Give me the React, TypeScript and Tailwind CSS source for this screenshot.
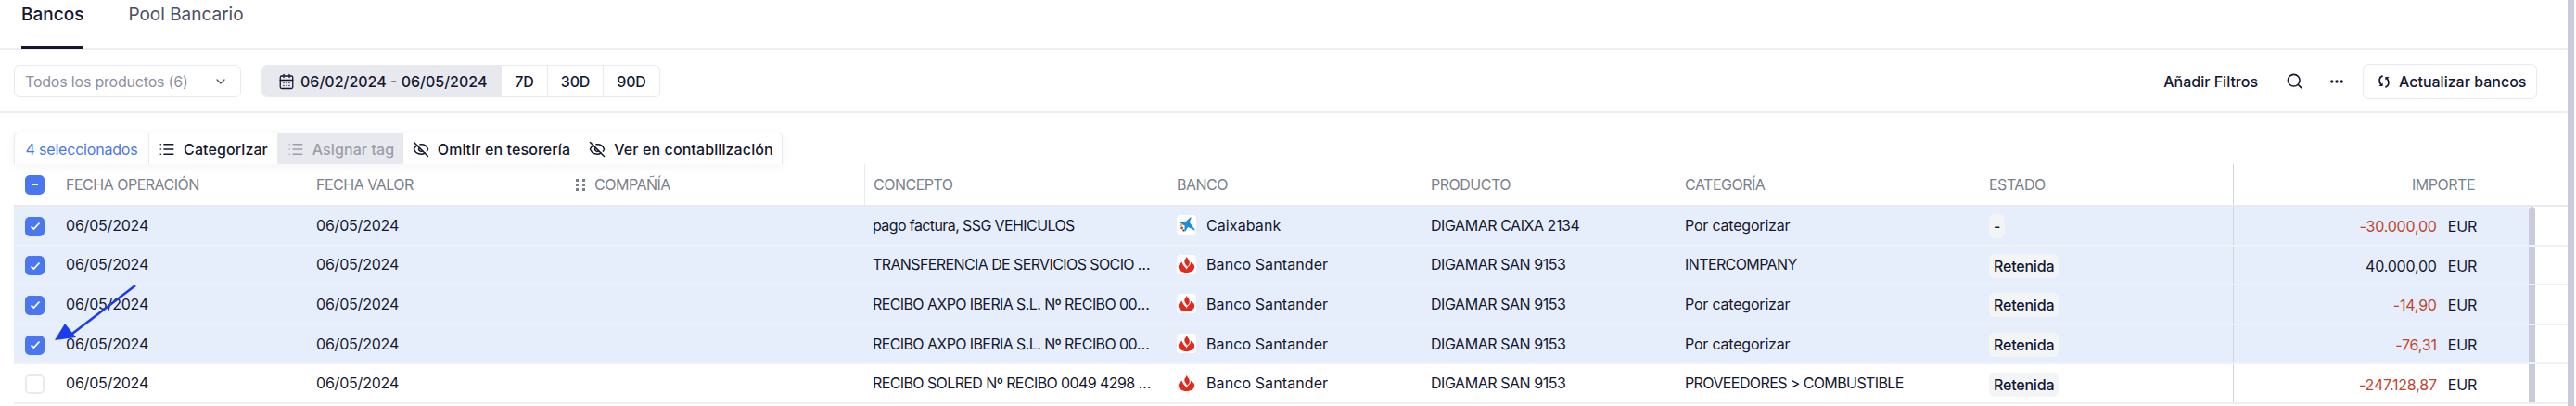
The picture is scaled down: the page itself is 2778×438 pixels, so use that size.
import { CalendarDays, ChevronDown, Ellipsis, EyeOff, List, Search } from "lucide-react";
import React from "react";

const GRID =
  "grid grid-cols-[47px_270px_279px_321px_328px_274px_274px_328px_272px_319px_9px]";

type Row = {
  concepto: string;
  banco: "caixa" | "san";
  producto: string;
  categoria: string;
  estado: string;
  importe: string;
  selected: boolean;
};

const rows: Row[] = [
  {
    concepto: "pago factura, SSG VEHICULOS",
    banco: "caixa",
    producto: "DIGAMAR CAIXA 2134",
    categoria: "Por categorizar",
    estado: "-",
    importe: "-30.000,00",
    selected: true,
  },
  {
    concepto: "TRANSFERENCIA DE SERVICIOS SOCIO SOCIEDAD",
    banco: "san",
    producto: "DIGAMAR SAN 9153",
    categoria: "INTERCOMPANY",
    estado: "Retenida",
    importe: "40.000,00",
    selected: true,
  },
  {
    concepto: "RECIBO AXPO IBERIA S.L. Nº RECIBO 0049 4298",
    banco: "san",
    producto: "DIGAMAR SAN 9153",
    categoria: "Por categorizar",
    estado: "Retenida",
    importe: "-14,90",
    selected: true,
  },
  {
    concepto: "RECIBO AXPO IBERIA S.L. Nº RECIBO 0049 4298",
    banco: "san",
    producto: "DIGAMAR SAN 9153",
    categoria: "Por categorizar",
    estado: "Retenida",
    importe: "-76,31",
    selected: true,
  },
  {
    concepto: "RECIBO SOLRED Nº RECIBO 0049 4298 5921 3310",
    banco: "san",
    producto: "DIGAMAR SAN 9153",
    categoria: "PROVEEDORES > COMBUSTIBLE",
    estado: "Retenida",
    importe: "-247.128,87",
    selected: false,
  },
];

function CaixaLogo() {
  return (
    <svg width="21" height="21" viewBox="0 0 21 21">
      <path
        d="M15 3 L13.2 8 L19 15.8 L12 12 L9 17 L9.2 11.2 L3 7.5 L10 7.8 Z"
        fill="#1a8fd6"
        stroke="#1a8fd6"
        strokeWidth="1.2"
        strokeLinejoin="round"
      />
      <circle cx="5" cy="11" r="1.2" fill="#f2b632" />
      <circle cx="5.6" cy="14" r="1.4" fill="#e2382f" />
      <circle cx="7.4" cy="16.6" r="1" fill="#333" />
    </svg>
  );
}

function SantanderLogo() {
  return (
    <svg width="21" height="21" viewBox="0 0 21 21">
      <path
        d="M10.8 1.8 C11.6 4.6 14.4 6 13.8 9.2 C13.5 10.8 12.2 11.6 11 12.8 C10.3 10.8 7.9 9.3 8.3 6.6 C8.6 4.8 10.4 3.8 10.8 1.8 Z"
        fill="#e3281c"
      />
      <path
        d="M6 7.8 C3.6 9 1.8 10.6 1.8 13 C1.8 16.4 5.6 19 10.5 19 C15.4 19 19.2 16.4 19.2 13 C19.2 10.6 17.4 9 15 7.8 C15.4 10.2 13.6 11.8 12 13.2 C11.4 14 10.9 14.8 10.7 15.8 C9.8 13.2 5.6 11 6 7.8 Z"
        fill="#e3281c"
      />
    </svg>
  );
}

function RefreshIcon() {
  return (
    <svg width="16" height="16" viewBox="0 0 16 16" fill="none" stroke="#14172f" strokeWidth="1.8">
      <path d="M6 2.2 C3 3.2 2 7.5 4.5 11" strokeLinecap="round" />
      <path d="M10 13.8 C13 12.8 14 8.5 11.5 5" strokeLinecap="round" />
      <path d="M2.4 13 L6.6 13 L6.6 9.4 Z" fill="#14172f" stroke="none" />
      <path d="M13.6 3 L9.4 3 L9.4 6.6 Z" fill="#14172f" stroke="none" />
    </svg>
  );
}

function Check({ state }: { state: "on" | "off" | "mixed" }) {
  if (state === "off") {
    return <div className="size-[21px] rounded-[5px] border-2 border-[#e8eaef] bg-white" />;
  }
  return (
    <div className="flex size-[21px] items-center justify-center rounded-[5px] bg-[#4a76ef]">
      {state === "on" ? (
        <svg width="12" height="10" viewBox="0 0 12 10" fill="none" stroke="white" strokeWidth="1.8">
          <path d="M1.5 5.5 L4.5 8 L10.5 1.5" />
        </svg>
      ) : (
        <div className="h-[2px] w-[7px] bg-white" />
      )}
    </div>
  );
}

function BarItem({
  icon,
  label,
  className,
}: {
  icon: React.ReactNode;
  label: string;
  className: string;
}) {
  return (
    <div className={`flex h-full items-center gap-[9px] tracking-[0.1px] ${className}`}>
      {icon}
      <span>{label}</span>
    </div>
  );
}

function Cell({ children, className = "" }: { children: React.ReactNode; className?: string }) {
  return <div className={`flex items-center pb-[1px] pl-[9px] ${className}`}>{children}</div>;
}

export default function App() {
  return (
    <div className="flex h-[438px] w-[2778px] overflow-hidden bg-white font-['Inter',sans-serif] text-[16px] tracking-[-0.2px] text-[#14172f]">
      <div className="w-[2769px] shrink-0">
        {/* tabs */}
        <div className="flex h-[54px] gap-[48px] border-b-2 border-[#eceef2] pl-[23px] text-[19px] tracking-normal">
          <div className="h-[53px] border-b-[3px] border-[#14172f] pt-[2px] font-medium">Bancos</div>
          <div className="pt-[2px] text-[#4b4f5e]">Pool Bancario</div>
        </div>

        {/* filtros */}
        <div className="flex h-[68px] items-center justify-between border-b-2 border-[#eceef2] pl-[15px] pr-[33px] pt-[1px]">
          <div className="flex items-center gap-[22px]">
            <div className="flex h-[35px] w-[245px] items-center justify-between rounded-[6px] border border-[#e8eaef] pl-[11px] pr-[13px] text-[#8c90a0]">
              <span>Todos los productos (6)</span>
              <ChevronDown size={16} strokeWidth={1.8} className="text-[#4b4f5e]" />
            </div>
            <div className="flex h-[35px] w-[430px] overflow-hidden rounded-[6px] border border-[#e8eaef] font-medium">
              <div className="flex w-[258px] items-center gap-[6px] bg-[#e8e9ee] pl-[17px] tracking-normal">
                <CalendarDays size={18} strokeWidth={1.7} />
                <span>06/02/2024 - 06/05/2024</span>
              </div>
              <div className="flex w-[50px] items-center justify-center border-r border-[#e8eaef]">7D</div>
              <div className="flex w-[60px] items-center justify-center border-r border-[#e8eaef]">30D</div>
              <div className="flex flex-1 items-center justify-center">90D</div>
            </div>
          </div>
          <div className="flex items-center font-medium tracking-normal">
            <span>Añadir Filtros</span>
            <Search size={19} strokeWidth={2} className="ml-[30px]" />
            <Ellipsis size={18} strokeWidth={2.4} className="ml-[27px]" />
            <div className="ml-[19px] flex h-[38px] w-[188px] items-center gap-[8px] rounded-[6px] border border-[#e8eaef] pl-[14px]">
              <RefreshIcon />
              <span>Actualizar bancos</span>
            </div>
          </div>
        </div>

        {/* acciones + tabla */}
        <div className="relative pl-[15px] pt-[21px]">
          <div className="flex h-[34px] w-[829px] items-center rounded-t-[5px] border border-b-0 border-[#e8eaef] font-medium shadow-[0_2px_12px_rgba(20,23,47,0.05)]">
            <div className="flex h-full w-[145px] items-center justify-center border-r border-[#e8eaef] font-normal text-[#4a76ef]">
              4 seleccionados
            </div>
            <BarItem
              icon={<List size={18} strokeWidth={2.2} />}
              label="Categorizar"
              className="w-[139px] justify-center border-r border-[#e8eaef]"
            />
            <BarItem
              icon={<List size={18} strokeWidth={1.7} />}
              label="Asignar tag"
              className="w-[135px] justify-center bg-[#e8e9ee] text-[#9a9daa]"
            />
            <BarItem
              icon={<EyeOff size={18} strokeWidth={2} />}
              label="Omitir en tesorería"
              className="w-[191px] justify-center gap-[7px] border-r border-[#e8eaef]"
            />
            <BarItem
              icon={<EyeOff size={18} strokeWidth={2} />}
              label="Ver en contabilización"
              className="flex-1 justify-center"
            />
          </div>

          <div className={`${GRID} h-[46px] border-b-2 border-[#e8eaef] tracking-[-0.5px] text-[#7b7f8c]`}>
            <div className="flex items-center justify-center border-r border-[#d0d4de] pr-[1px]">
              <Check state="mixed" />
            </div>
            <Cell>FECHA OPERACIÓN</Cell>
            <Cell>FECHA VALOR</Cell>
            <Cell className="gap-[9px]">
              <svg width="12" height="14" viewBox="0 0 12 14" fill="#7b7f8c">
                <rect x="1" y="1" width="3" height="3" />
                <rect x="8" y="1" width="3" height="3" />
                <rect x="1" y="6" width="3" height="3" />
                <rect x="8" y="6" width="3" height="3" />
                <rect x="1" y="11" width="3" height="3" />
                <rect x="8" y="11" width="3" height="3" />
              </svg>
              COMPAÑÍA
            </Cell>
            <Cell className="border-l border-[#e8eaef]">CONCEPTO</Cell>
            <Cell>BANCO</Cell>
            <Cell>PRODUCTO</Cell>
            <Cell>CATEGORÍA</Cell>
            <Cell>ESTADO</Cell>
            <div className="flex items-center justify-end border-l border-[#d0d4de] pb-[1px] pr-[58px]">IMPORTE</div>
            <div />
          </div>

          {rows.map((r, i) => (
            <div
              key={i}
              className={`${GRID} h-[42.6px] border-b-2 ${
                r.selected ? "border-[#edf1f8]" : "border-[#eceef2]"
              }`}
            >
              <div
                className={`flex items-center justify-center border-r border-[#d0d4de] pr-[1px] pt-[2px] ${
                  r.selected ? "bg-[#e6eefb]" : "bg-white"
                }`}
              >
                <Check state={r.selected ? "on" : "off"} />
              </div>
              <div className={`col-span-9 grid grid-cols-subgrid ${r.selected ? "bg-[#e6eefb]" : "bg-white"}`}>
                <Cell>06/05/2024</Cell>
                <Cell>06/05/2024</Cell>
                <div />
                <Cell className="min-w-0 pr-[12px]">
                  <span className="truncate tracking-[-0.6px]">{r.concepto}</span>
                </Cell>
                <Cell className="gap-[11px]">
                  <div className={`flex size-[21px] items-center justify-center rounded-[4px] ${r.selected ? "bg-white" : ""}`}>
                    {r.banco === "caixa" ? <CaixaLogo /> : <SantanderLogo />}
                  </div>
                  <span className="tracking-[0.1px]">{r.banco === "caixa" ? "Caixabank" : "Banco Santander"}</span>
                </Cell>
                <Cell>
                  <span className="tracking-[-0.45px]">{r.producto}</span>
                </Cell>
                <Cell>
                  <span className={r.categoria === r.categoria.toUpperCase() ? "tracking-[-0.6px]" : ""}>
                    {r.categoria}
                  </span>
                </Cell>
                <div className="flex items-center pl-[9px] pt-[2px]">
                  <div className="flex h-[26px] items-center rounded-[6px] bg-[#f3f4f6] px-[5px] font-medium">
                    {r.estado}
                  </div>
                </div>
                <div className="flex items-center justify-end border-l border-[#d0d4de] pr-[56px] pt-[2px]">
                  <span className={r.importe.startsWith("-") ? "text-[#c2452d]" : ""}>{r.importe}</span>
                  <span className="ml-[12px]">EUR</span>
                </div>
              </div>
              <div className="bg-white">
                <div className={`h-full w-[7px] bg-[#c8ccda] ${i === 0 ? "rounded-t-[4px]" : ""}`} />
              </div>
            </div>
          ))}

          {/* flecha anotada sobre la captura */}
          <svg
            className="absolute left-[50px] top-[175px]"
            width="110"
            height="80"
            viewBox="0 0 110 80"
          >
            <line x1="96" y1="11" x2="24" y2="66" stroke="#1a3cf0" strokeWidth="2.6" />
            <path d="M9 70 L20 52 L32 67 Z" fill="#1a3cf0" />
          </svg>
        </div>
      </div>

      {/* scrollbar de la pagina */}
      <div className="w-[7px] bg-[#c8ccda]" />
    </div>
  );
}
